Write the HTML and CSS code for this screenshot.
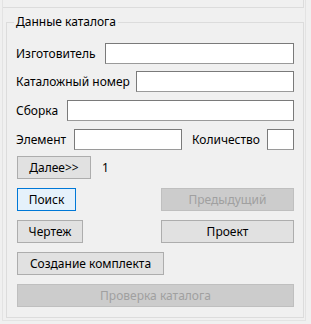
FILE: index.html
```html
<!DOCTYPE html>
<html lang="ru">
<head>
    <meta charset="UTF-8">
    <title>Данные каталога</title>
    <link rel="stylesheet" href="styles.css">
</head>
<body>
    <div class="panel">
        <div class="top-strip"></div>
        <fieldset class="catalog">
            <legend>Данные каталога</legend>
            <div class="content">
                <div class="row">
                    <label class="lbl" style="width: 89px">Изготовитель</label>
                    <input type="text" class="field grow">
                </div>
                <div class="row gap7">
                    <label class="lbl" style="width: 120px">Каталожный номер</label>
                    <input type="text" class="field grow">
                </div>
                <div class="row gap8">
                    <label class="lbl" style="width: 51px">Сборка</label>
                    <input type="text" class="field grow">
                </div>
                <div class="row gap8">
                    <label class="lbl" style="width: 58px">Элемент</label>
                    <input type="text" class="field elem">
                    <label class="lbl qty">Количество</label>
                    <input type="text" class="field grow">
                </div>
                <div class="btn-row gap6">
                    <button class="btn next">Далее&gt;&gt;</button>
                    <span class="counter">1</span>
                </div>
                <div class="btn-row gap9 split">
                    <button class="btn focused search">Поиск</button>
                    <button class="btn wide" disabled>Предыдущий</button>
                </div>
                <div class="btn-row gap9 split">
                    <button class="btn drawing">Чертеж</button>
                    <button class="btn wide">Проект</button>
                </div>
                <div class="btn-row gap9">
                    <button class="btn kit">Создание комплекта</button>
                </div>
                <div class="btn-row gap9">
                    <button class="btn full" disabled>Проверка каталога</button>
                </div>
            </div>
        </fieldset>
    </div>
</body>
</html>
```

FILE: styles.css
```css
body {
    margin: 0;
    background-color: #f0f0f0;
    font-family: "Noto Sans", "Liberation Sans", sans-serif;
    font-size: 12px;
    color: #000;
}
.panel {
    margin-left: 2px;
    width: 304px;
    height: 321px;
    box-sizing: border-box;
    border: 1px solid #e3e3e3;
    border-top: none;
}
.top-strip {
    width: 301px;
    height: 8px;
    box-sizing: border-box;
    border-right: 1px solid #dcdcdc;
    border-bottom: 1px solid #dcdcdc;
}
.catalog {
    margin: 7px 0 0 3px;
    width: 298px;
    min-width: 0;
    height: 303px;
    box-sizing: border-box;
    padding: 0;
    border: 1px solid #dcdcdc;
}
.catalog legend {
    margin-left: 7px;
    padding: 0 2px;
    line-height: 14px;
}
.content {
    padding: 14px 9px 0 9px;
}
.row {
    display: flex;
    align-items: center;
    height: 21px;
}
.btn-row {
    display: flex;
    align-items: center;
    height: 23px;
    padding-left: 1px;
}
.split {
    justify-content: space-between;
}
.gap6 { margin-top: 6px; }
.gap7 { margin-top: 7px; }
.gap8 { margin-top: 8px; }
.gap9 { margin-top: 9px; }
.lbl {
    flex: none;
    white-space: nowrap;
}
.qty {
    margin-left: 10px;
    width: 75px;
}
.field {
    height: 21px;
    box-sizing: border-box;
    margin: 0;
    padding: 0 2px;
    border: 1px solid #7a7a7a;
    border-bottom-color: #9a9a9a;
    background-color: #fff;
    font: inherit;
}
.grow {
    flex: 1;
    width: 0;
    min-width: 0;
}
.elem {
    width: 108px;
}
.btn {
    height: 23px;
    box-sizing: border-box;
    margin: 0;
    padding: 0;
    border: 1px solid #adadad;
    background-color: #e1e1e1;
    font: inherit;
    color: #000;
}
.btn:disabled {
    background-color: #cccccc;
    border-color: #bfbfbf;
    color: #a0a0a0;
}
.btn.focused {
    background-color: #e5f1fb;
    border-color: #0078d7;
}
.next { width: 74px; }
.counter { margin-left: 11px; }
.search { width: 59px; }
.drawing { width: 66px; }
.wide { width: 133px; }
.kit { width: 147px; }
.full { width: 277px; }
```
